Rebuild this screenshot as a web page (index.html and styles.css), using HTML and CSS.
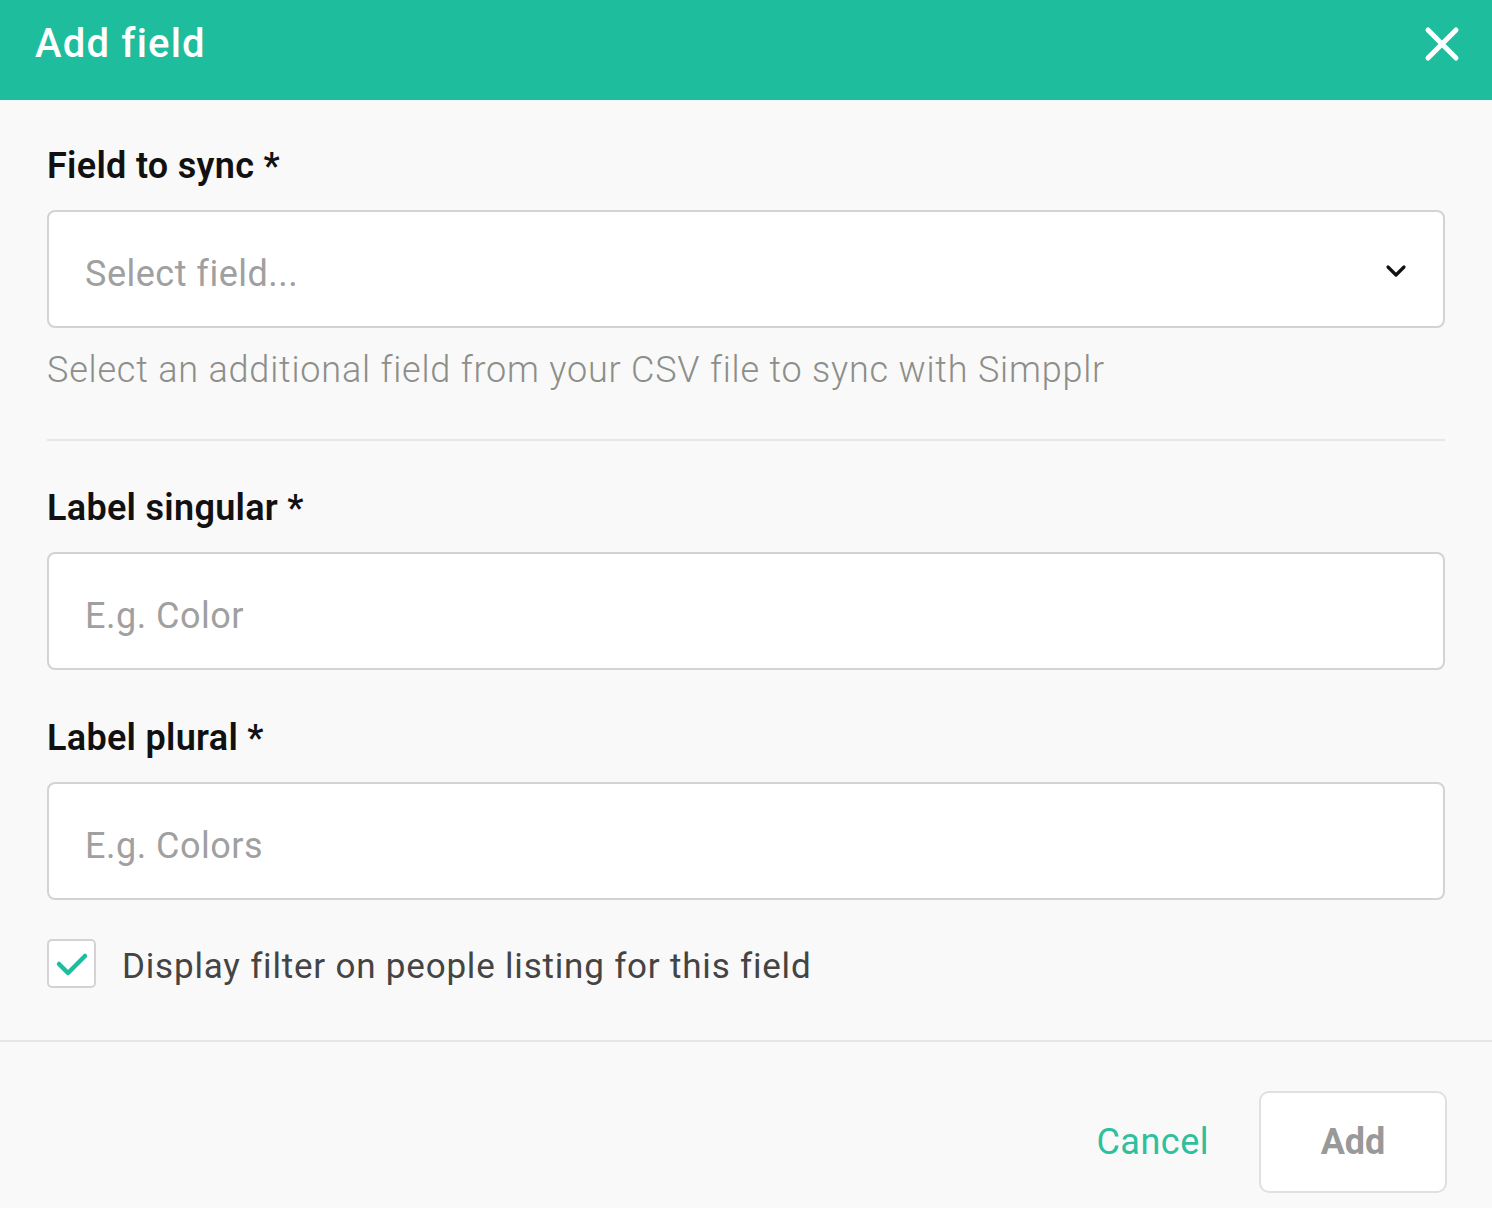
FILE: index.html
```html
<!DOCTYPE html>
<html>
<head>
<meta charset="utf-8">
<link rel="stylesheet" href="styles.css">
</head>
<body>
<div class="modal">
  <header class="modal-header">
    <h1 class="modal-title">Add field</h1>
    <button class="close-btn" aria-label="Close">
      <svg width="36" height="36" viewBox="0 0 36 36"><path d="M4 4 L32 32 M32 4 L4 32" stroke="#fff" stroke-width="5" stroke-linecap="round" fill="none"/></svg>
    </button>
  </header>
  <main class="modal-body">
    <section class="field">
      <label class="field-label">Field to sync *</label>
      <div class="input select">
        <span class="placeholder">Select field...</span>
        <svg class="chevron" width="22" height="14" viewBox="0 0 22 14"><path d="M3 3 L11 11 L19 3" stroke="#111" stroke-width="3.2" stroke-linecap="round" stroke-linejoin="round" fill="none"/></svg>
      </div>
      <p class="help">Select an additional field from your CSV file to sync with Simpplr</p>
    </section>
    <hr class="divider">
    <section class="field">
      <label class="field-label">Label singular *</label>
      <div class="input"><span class="placeholder">E.g. Color</span></div>
    </section>
    <section class="field field-second">
      <label class="field-label">Label plural *</label>
      <div class="input"><span class="placeholder">E.g. Colors</span></div>
    </section>
    <div class="check-row">
      <span class="checkbox">
        <svg width="36" height="30" viewBox="0 0 36 30"><path d="M5 15 L14 24 L31 7" stroke="#1dbd9e" stroke-width="4.5" stroke-linecap="round" stroke-linejoin="round" fill="none"/></svg>
      </span>
      <span class="check-label">Display filter on people listing for this field</span>
    </div>
  </main>
  <footer class="modal-footer">
    <button class="btn-link">Cancel</button>
    <button class="btn">Add</button>
  </footer>
</div>
</body>
</html>
```
FILE: styles.css
```css
* { box-sizing: border-box; }
html, body { margin: 0; padding: 0; }
body {
  background: #f9f9f9;
  font-family: Roboto, "Liberation Sans", sans-serif;
  color: #111;
}
.modal { width: 1492px; height: 1208px; overflow: hidden; }
.modal-header {
  height: 100px;
  background: #1dbd9e;
  display: flex;
  align-items: center;
  justify-content: space-between;
  padding: 0 32px 0 35px;
}
.modal-title {
  margin: 0;
  color: #fff;
  font-size: 40px;
  font-weight: 500;
  letter-spacing: 1.2px;
  line-height: 1;
  padding-bottom: 12px;
}
.close-btn {
  background: none;
  border: 0;
  padding: 0;
  width: 36px;
  height: 36px;
  margin-bottom: 12px;
}
.modal-body { padding: 42px 47px 0 47px; }
.field { display: flex; flex-direction: column; }
.field-label {
  font-size: 36px;
  font-weight: 600;
  line-height: 44px;
  letter-spacing: 0.3px;
  color: #111;
  margin-top: 2px;
}
.input {
  margin-top: 22px;
  height: 118px;
  background: #fff;
  border: 2px solid #d3d3d3;
  border-radius: 8px;
  display: flex;
  align-items: center;
  justify-content: space-between;
  padding: 0 36px 0 36px;
}
.chevron { margin-top: 4px; }
.placeholder {
  font-size: 36px;
  color: #a0a0a0;
  letter-spacing: 0.5px;
  padding-top: 9px;
}
.help {
  margin: 20px 0 0;
  font-size: 36px;
  line-height: 44px;
  color: #8c8e89;
  font-weight: 300;
  letter-spacing: 0.8px;
}
.divider {
  margin: 47px 0 43px;
  border: 0;
  border-top: 2px solid #e6e6e6;
}
.field-second { margin-top: 44px; }
.check-row {
  display: flex;
  align-items: center;
  gap: 26px;
  margin-top: 39px;
}
.checkbox {
  width: 49px;
  height: 49px;
  background: #fff;
  border: 2px solid #d3d3d3;
  border-radius: 5px;
  display: flex;
  align-items: center;
  justify-content: center;
}
.check-label {
  font-size: 35px;
  color: #444;
  letter-spacing: 0.8px;
  padding-top: 5px;
}
.modal-footer {
  margin-top: 52px;
  border-top: 2px solid #e6e6e6;
  display: flex;
  justify-content: flex-end;
  align-items: center;
  gap: 50px;
  padding: 49px 45px 0 0;
}
.btn-link {
  background: none;
  border: 0;
  padding: 0;
  font-family: inherit;
  font-size: 36px;
  letter-spacing: 0.5px;
  color: #2ebf9d;
}
.btn {
  width: 188px;
  height: 102px;
  background: #fff;
  border: 2px solid #e0e0e0;
  border-radius: 10px;
  font-family: inherit;
  font-size: 36px;
  font-weight: 700;
  color: #999;
}
```
